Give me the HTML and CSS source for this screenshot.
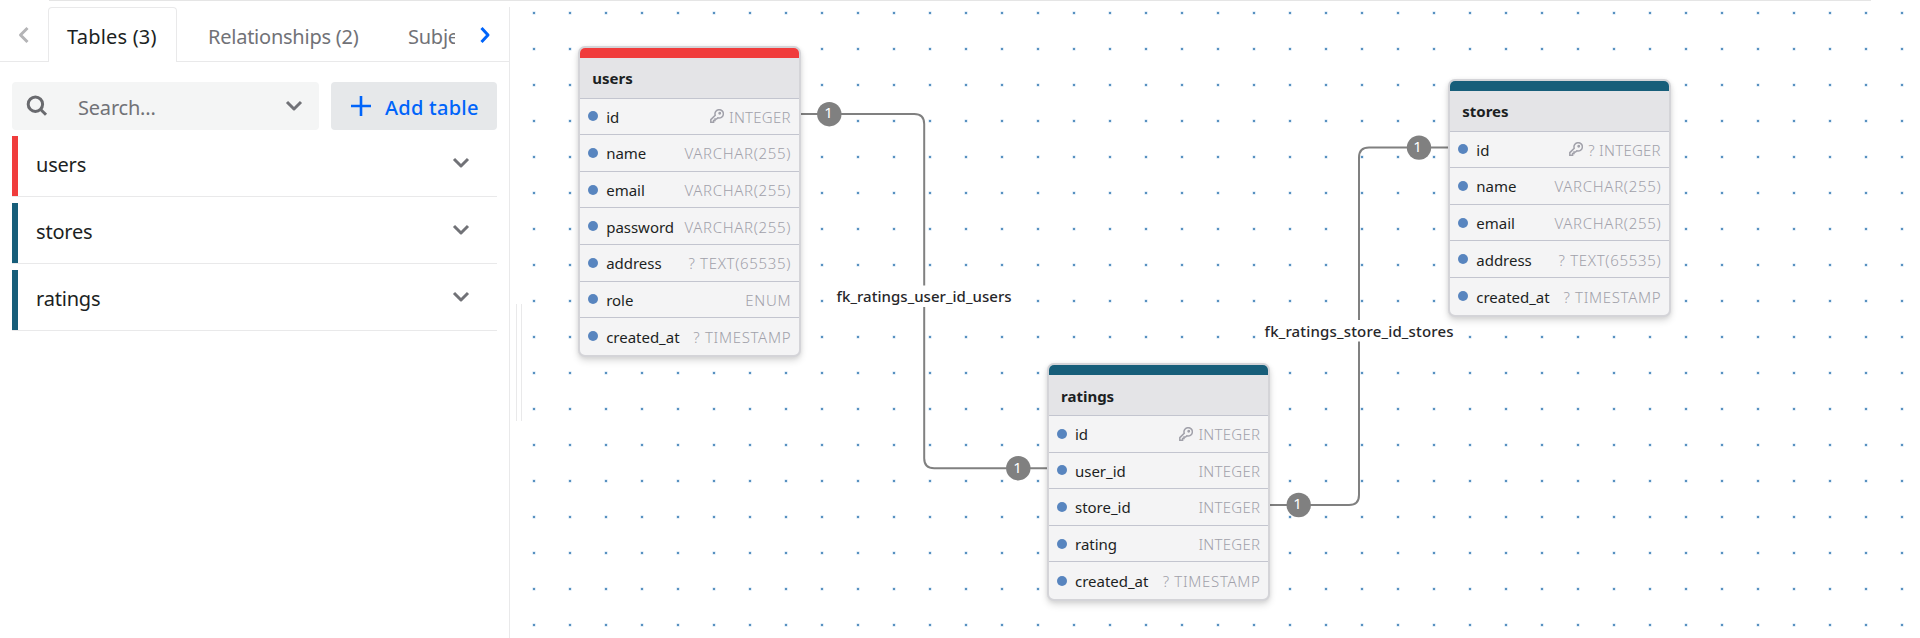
FILE: index.html
```
<!DOCTYPE html>
<html lang="en">
<head>
<meta charset="utf-8">
<title>Diagram editor</title>
<link rel="stylesheet" href="styles.css">
</head>
<body>
<div class="topline"></div>
<div class="app">
  <aside class="sidebar">
    <nav class="tabs">
      <span class="tab-arrow prev"><svg width="12" height="18" viewBox="0 0 12 18"><path d="M9.5 2 L2.5 9 L9.5 16"/></svg></span>
      <span class="tab active">Tables (3)</span>
      <span class="tab rel">Relationships (2)</span>
      <span class="tab clip">Subje</span>
      <span class="tab-arrow next"><svg width="12" height="18" viewBox="0 0 12 18"><path d="M2.5 2 L9 9 L2.5 16"/></svg></span>
    </nav>
    <div class="tools">
      <div class="search">
        <svg class="glass" width="22" height="22" viewBox="0 0 22 22"><circle cx="9.4" cy="9.2" r="7.2"/><path d="M14.7 14.5 L20 19.8"/></svg>
        <span class="placeholder">Search...</span>
        <svg class="chev" width="18" height="12" viewBox="0 0 18 12"><path d="M2 2 L9 9 L16 2"/></svg>
      </div>
      <button class="add"><svg width="20" height="20" viewBox="0 0 20 20"><path d="M10 0 V20 M0 10 H20"/></svg><span>Add table</span></button>
    </div>
    <ul class="list">
      <li class="item red"><span>users</span><svg class="chev" width="18" height="12" viewBox="0 0 18 12"><path d="M2 2 L9 9 L16 2"/></svg></li>
      <li class="item"><span>stores</span><svg class="chev" width="18" height="12" viewBox="0 0 18 12"><path d="M2 2 L9 9 L16 2"/></svg></li>
      <li class="item"><span>ratings</span><svg class="chev" width="18" height="12" viewBox="0 0 18 12"><path d="M2 2 L9 9 L16 2"/></svg></li>
    </ul>
  </aside>
  <div class="resizer"><div class="grip"></div></div>
  <main class="canvas">
    <svg class="edges" width="1395" height="638" viewBox="525 0 1395 638">
      <defs>
        <pattern id="dots" x="12" y="31" width="36" height="36" patternUnits="userSpaceOnUse">
          <rect x="16.2" y="16.2" width="3.6" height="3.6" rx="1" fill="#dbe9f5"/>
          <rect x="17" y="17" width="2" height="2" fill="#5891c0"/>
        </pattern>
      </defs>
      <rect x="525" y="0" width="1395" height="638" fill="url(#dots)"/>
      <path class="edge" d="M800 114 H914.2 Q924.2 114 924.2 124 V458.2 Q924.2 468.2 934.2 468.2 H1048"/>
      <path class="edge" d="M1449 147.6 H1369 Q1359 147.6 1359 157.6 V495 Q1359 505 1349 505 H1270"/>
      <rect x="834" y="285.5" width="180" height="21.5" fill="#fff"/>
      <rect x="1262" y="320" width="194" height="21.5" fill="#fff"/>
      <text class="label" x="836.6" y="302" textLength="175">fk_ratings_user_id_users</text>
      <text class="label" x="1264.6" y="337" textLength="189">fk_ratings_store_id_stores</text>
      <g class="ends"><circle cx="829.3" cy="114.2" r="12.2"/><circle cx="1018.3" cy="468.2" r="12.2"/><circle cx="1419" cy="147.6" r="12.2"/><circle cx="1298.7" cy="505" r="12.2"/></g>
      <g class="nums"><text x="828.6" y="117.8">1</text><text x="1017.6" y="472.6">1</text><text x="1417.5" y="151.8">1</text><text x="1297.5" y="508.6">1</text></g>
    </svg>
    <section class="table users">
      <div class="bar"></div><h3>users</h3>
      <div class="row"><i></i><b>id</b><svg class="key" width="14" height="14" viewBox="0 0 14 14"><path d="M5.2 6.2 A4.2 4.2 0 1 1 7.8 8.8 L6.6 10 H5 V11.6 H3.6 V13.2 H.8 V10.6 Z"/><circle cx="9.7" cy="4.3" r=".7"/></svg><em class="int">INTEGER</em></div>
      <div class="row"><i></i><b>name</b><em>VARCHAR(255)</em></div>
      <div class="row"><i></i><b>email</b><em>VARCHAR(255)</em></div>
      <div class="row"><i></i><b>password</b><em>VARCHAR(255)</em></div>
      <div class="row"><i></i><b>address</b><em>? TEXT(65535)</em></div>
      <div class="row"><i></i><b>role</b><em>ENUM</em></div>
      <div class="row"><i></i><b>created_at</b><em>? TIMESTAMP</em></div>
    </section>
    <section class="table ratings">
      <div class="bar"></div><h3>ratings</h3>
      <div class="row"><i></i><b>id</b><svg class="key" width="14" height="14" viewBox="0 0 14 14"><path d="M5.2 6.2 A4.2 4.2 0 1 1 7.8 8.8 L6.6 10 H5 V11.6 H3.6 V13.2 H.8 V10.6 Z"/><circle cx="9.7" cy="4.3" r=".7"/></svg><em class="int">INTEGER</em></div>
      <div class="row"><i></i><b>user_id</b><em class="int">INTEGER</em></div>
      <div class="row"><i></i><b>store_id</b><em class="int">INTEGER</em></div>
      <div class="row"><i></i><b>rating</b><em class="int">INTEGER</em></div>
      <div class="row"><i></i><b>created_at</b><em>? TIMESTAMP</em></div>
    </section>
    <section class="table stores">
      <div class="bar"></div><h3>stores</h3>
      <div class="row"><i></i><b>id</b><svg class="key" width="14" height="14" viewBox="0 0 14 14"><path d="M5.2 6.2 A4.2 4.2 0 1 1 7.8 8.8 L6.6 10 H5 V11.6 H3.6 V13.2 H.8 V10.6 Z"/><circle cx="9.7" cy="4.3" r=".7"/></svg><em class="int">? INTEGER</em></div>
      <div class="row"><i></i><b>name</b><em>VARCHAR(255)</em></div>
      <div class="row"><i></i><b>email</b><em>VARCHAR(255)</em></div>
      <div class="row"><i></i><b>address</b><em>? TEXT(65535)</em></div>
      <div class="row"><i></i><b>created_at</b><em>? TIMESTAMP</em></div>
    </section>
  </main>
</div>
</body>
</html>
```
FILE: styles.css
```
* { box-sizing: border-box; }
body { margin: 0; height: 638px; overflow: hidden; background: #fff; color: #1c1f23; font-family: "Noto Sans", "Open Sans", sans-serif; }
svg { display: block; flex: none; fill: none; }
.topline { position: absolute; left: 49px; top: 0; width: 1822px; height: 1px; background: #e5e5e5; z-index: 2; }
.app { display: flex; height: 638px; }
.sidebar { width: 510px; margin-top: 7px; border-right: 1px solid #e9e9ea; flex: none; }

.tabs { display: flex; height: 55px; box-shadow: inset 0 -1px #e9e9ea; font-size: 20px; letter-spacing: -0.24px; color: #717277; }
.tab-arrow { width: 48px; flex: none; display: flex; justify-content: center; padding-top: 19px; }
.tab-arrow path { stroke: #b4b4b6; stroke-width: 3; stroke-linejoin: round; }
.tab-arrow.next path { stroke: #0064fa; }
.tab { height: 55px; line-height: 60px; white-space: nowrap; flex: none; }
.tab.active { width: 129px; padding-left: 18px; color: #1c1f23; background: #fff; border: 1px solid #e9e9ea; border-bottom: 0; border-radius: 4px 4px 0 0; line-height: 58px; letter-spacing: 0.2px; }
.tab.rel { padding-left: 31px; width: 231px; }
.tab.clip { width: 47px; overflow: hidden; }
.tab-arrow.next { width: 54px; padding-left: 5px; }

.tools { display: flex; gap: 12px; padding: 20px 12px 0; }
.search { width: 307px; height: 48px; background: #f4f5f5; border-radius: 4px; display: flex; align-items: center; padding: 0 16px 0 14px; font-size: 20px; letter-spacing: -0.2px; color: #717277; }
.glass { stroke: #696a6e; stroke-width: 3; }
.placeholder { margin-left: 30px; flex: 1; padding-top: 2px; }
.chev path { stroke: #717277; stroke-width: 3; stroke-linejoin: round; }
.add { flex: 1; height: 48px; border: 0; border-radius: 4px; background: #e6e8ea; color: #0064fa; display: flex; align-items: center; padding: 0 0 0 20px; gap: 14px; font: 500 20px "Noto Sans", sans-serif; letter-spacing: 0.25px; white-space: nowrap; }
.add svg { stroke: #0064fa; stroke-width: 2.6; }
.add span { padding-top: 2px; }

.list { list-style: none; margin: 6px 12px 0; padding: 0; display: flex; flex-direction: column; gap: 6px; }
.item { height: 61px; display: flex; align-items: center; justify-content: space-between; border-bottom: 1px solid #e9e9ea; padding: 0 27px 0 0; font-size: 20px; letter-spacing: -0.2px; }
.item::before { content: ""; width: 6px; height: 60px; background: #175e7a; margin-right: 18px; flex: none; }
.item.red::before { background: #f03c3c; }
.item span { flex: 1; padding-bottom: 4px; }
.item svg { margin-top: -6px; }

.resizer { width: 15px; flex: none; display: flex; align-items: center; justify-content: center; padding-top: 87px; }
.grip { width: 6px; height: 117px; border: solid #e9e9ea; border-width: 0 1px; margin-left: 3px; }
.canvas { position: relative; width: 1395px; height: 638px; flex: none; overflow: hidden; }
.edge { stroke: #808080; stroke-width: 2; }
.label { fill: #27272a; font-size: 15px; font-weight: 500; }
.ends { fill: #808080; }
.nums { fill: #fff; font-size: 15px; font-weight: 400; text-anchor: middle; }

/* Diagram nodes sit on a free canvas */
.table { position: absolute; width: 222.4px; border: 2px solid #d4d4d8; border-radius: 7px; overflow: hidden; background: #f4f4f5; box-shadow: 0 4px 7px rgba(0,0,0,.13), 0 1px 4px rgba(0,0,0,.08); }
.users { left: 53.2px; top: 46px; }
.ratings { left: 522px; top: 363px; width: 223px; }
.stores { left: 923.3px; top: 79px; }
.bar { height: 10px; background: #175e7a; }
.users .bar { background: #f03c3c; }
.table h3 { margin: 0; height: 40.6px; background: #e4e4e7; border-bottom: 1px solid #c3c5cf; padding-left: 12px; font-size: 15px; font-weight: 700; line-height: 41px; }
.ratings h3 { height: 41px; line-height: 42px; }
.row { height: 36.6px; display: flex; align-items: center; border-bottom: 1px solid #c3c5cf; padding: 0 8px 0 8px; white-space: nowrap; font-size: 15px; }
.row:last-child { border-bottom: 0; }
.row i { width: 10px; height: 10px; border-radius: 50%; background: #5885bf; margin-right: 8px; }
.row b { font-weight: 400; letter-spacing: -0.02px; flex: 1; padding-top: 1px; }
.row em { font-style: normal; font-weight: 300; color: #a1a1aa; letter-spacing: 0.68px; padding-top: 1px; margin-right: -0.6px; }
.row em.int { letter-spacing: 0.25px; margin-right: -0.2px; }
.key { margin-right: 5px; stroke: #a1a1aa; stroke-width: 1.5; }
```
